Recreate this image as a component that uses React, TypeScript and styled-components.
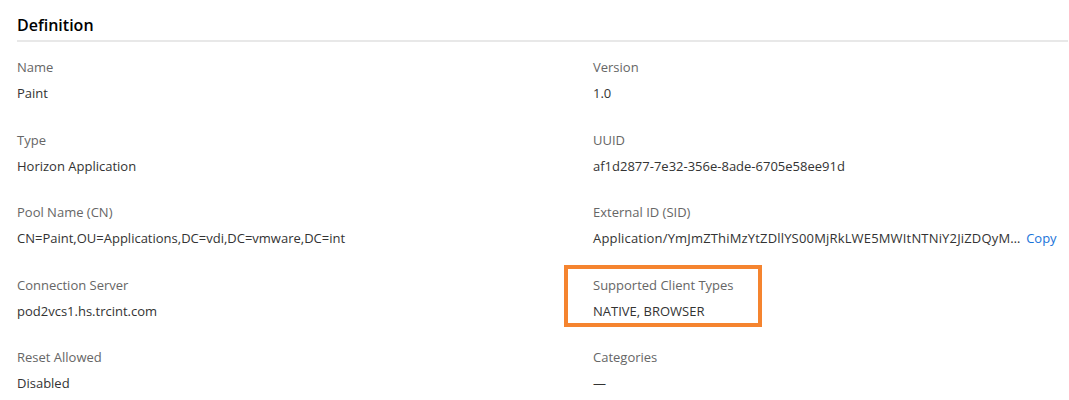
import React from 'react';
import styled, { createGlobalStyle } from 'styled-components';

const GlobalStyle = createGlobalStyle`
  body {
    margin: 0;
    background: #fff;
    font-family: "Open Sans", "Noto Sans", Arial, sans-serif;
    -webkit-font-smoothing: antialiased;
  }
`;

const Page = styled.div`
  padding: 0 1px 0 17px;
`;

const Heading = styled.h2`
  margin: 0 0 15px;
  padding: 13px 0 3px;
  font-size: 16px;
  line-height: 24px;
  font-weight: 600;
  color: #000;
  border-bottom: 2px solid #e8e8e8;
`;

const Grid = styled.dl`
  margin: 0;
  display: grid;
  grid-template-columns: 576px 1fr;
  row-gap: 26.5px;
`;

const Field = styled.div`
  position: relative;
  display: flex;
  flex-direction: column;
  gap: 6px;
  min-width: 0;
`;

const Label = styled.dt`
  font-size: 13px;
  line-height: 20px;
  color: #666;
`;

const Value = styled.dd<{ $wide?: boolean }>`
  margin: 0;
  font-size: 13px;
  line-height: 20px;
  color: #333;
  white-space: nowrap;
  letter-spacing: ${({ $wide }) => ($wide ? '0.17px' : 'normal')};
`;

const Link = styled.a`
  margin-left: 2px;
  color: #1a73d9;
  letter-spacing: normal;
  text-decoration: none;
  cursor: pointer;
`;

const Highlight = styled.span`
  position: absolute;
  left: -29px;
  top: -10px;
  width: 198px;
  height: 62px;
  box-sizing: border-box;
  border: 4px solid #f5842f;
  pointer-events: none;
`;

type Item = { label: string; value: React.ReactNode; marked?: boolean; wide?: boolean };

const items: Item[] = [
  { label: 'Name', value: 'Paint' },
  { label: 'Version', value: '1.0' },
  { label: 'Type', value: 'Horizon Application' },
  { label: 'UUID', value: 'af1d2877-7e32-356e-8ade-6705e58ee91d' },
  { label: 'Pool Name (CN)', value: 'CN=Paint,OU=Applications,DC=vdi,DC=vmware,DC=int' },
  {
    label: 'External ID (SID)',
    wide: true,
    value: (
      <>
        Application/YmJmZThiMzYtZDllYS00MjRkLWE5MWItNTNiY2JiZDQyM… <Link>Copy</Link>
      </>
    ),
  },
  { label: 'Connection Server', value: 'pod2vcs1.hs.trcint.com' },
  { label: 'Supported Client Types', value: 'NATIVE, BROWSER', marked: true },
  { label: 'Reset Allowed', value: 'Disabled' },
  { label: 'Categories', value: '—' },
];

export default function App() {
  return (
    <>
      <GlobalStyle />
      <Page>
        <Heading>Definition</Heading>
        <Grid>
          {items.map((it) => (
            <Field key={it.label}>
              <Label>{it.label}</Label>
              <Value $wide={it.wide}>{it.value}</Value>
              {it.marked && <Highlight />}
            </Field>
          ))}
        </Grid>
      </Page>
    </>
  );
}
